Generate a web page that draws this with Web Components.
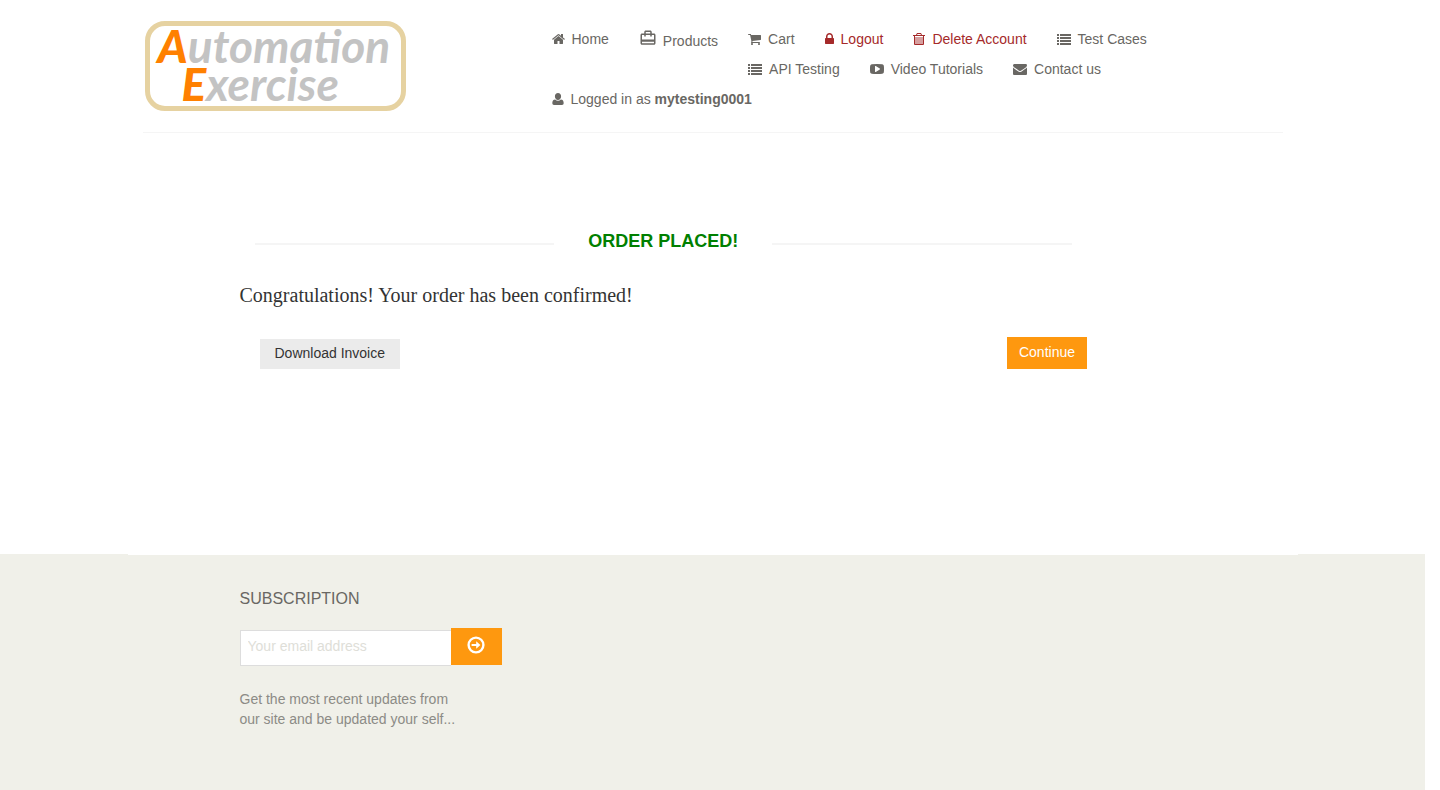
<!DOCTYPE html>
<html lang="en">
<head>
<meta charset="utf-8">
<title>Automation Exercise - Order Placed</title>
<style>
  body {
    margin: 0;
    background: #fff;
    color: #696763;
    font: 14px/20px "Liberation Sans", Arial, sans-serif;
  }
</style>
</head>
<body>
<ae-page>
  <ae-header slot="header"></ae-header>
  <ae-order>Congratulations! Your order has been confirmed!</ae-order>
  <ae-footer slot="footer"></ae-footer>
</ae-page>

<script>
const ICONS = {
  home: ['64 0 1664 1792', '<path d="M1472 992v480q0 26-19 45t-45 19h-384v-384h-256v384h-384q-26 0-45-19t-19-45v-480q0-1 .5-3t.5-3l575-474 575 474q1 2 1 6zm223-69l-62 74q-8 9-21 11h-3q-13 0-21-7l-692-577-692 577q-12 8-24 7-13-2-21-11l-62-74q-8-10-7-23.5t11-21.5l719-599q32-26 76-26t76 26l244 204v-195q0-14 9-23t23-9h192q14 0 23 9t9 23v408l219 182q10 8 11 21.5t-7 23.5z"/>'],
  cart: ['64 0 1664 1792', '<path d="M704 1536q0 52-38 90t-90 38-90-38-38-90 38-90 90-38 90 38 38 90zm896 0q0 52-38 90t-90 38-90-38-38-90 38-90 90-38 90 38 38 90zm128-1088v512q0 24-16.5 42.5t-40.5 21.5l-1044 122q13 60 13 70 0 16-24 64h920q26 0 45 19t19 45-19 45-45 19h-1024q-26 0-45-19t-19-45q0-11 8-31.5t16-36 21.5-40 15.5-29.5l-177-823h-204q-26 0-45-19t-19-45 19-45 45-19h256q16 0 28.5 6.5t19.5 15.5 13 24.5 8 26 5.5 29.5 4.5 26h1201q26 0 45 19t19 45z"/>'],
  lock: ['320 0 1152 1792', '<path d="M640 768h512v-192q0-106-75-181t-181-75-181 75-75 181v192zm832 96v576q0 40-28 68t-68 28h-960q-40 0-68-28t-28-68v-576q0-40 28-68t68-28h32v-192q0-184 132-316t316-132 316 132 132 316v192h32q40 0 68 28t28 68z"/>'],
  trash: ['0 0 12 14', '<path d="M2 5h8v7H2z" opacity=".45"/><path d="M4 1h4l1 2h3v1h-1v8q0 1-1 1H2q-1 0-1-1V4H0V3h3zm.5 1L4 3h4l-.5-1zM2 4v8h8V4z" fill-rule="evenodd"/>'],
  list: ['0 0 14 14', '<path d="M0 2h2v2H0zM3 2h11v2H3zM0 5h2v2H0zM3 5h11v2H3zM0 8h2v2H0zM3 8h11v2H3zM0 11h2v2H0zM3 11h11v2H3z"/>'],
  video: ['0 0 1792 1792', '<path d="M1280 896q0-37-30-54l-512-320q-31-20-65-2-33 18-33 56v640q0 38 33 56 16 8 31 8 20 0 34-10l512-320q30-17 30-54zm512 0q0 96-1 150t-8.5 136.5-22.5 147.5q-16 73-69 123t-124 58q-222 25-671 25t-671-25q-71-8-124.5-58t-69.5-123q-14-65-21.5-147.5t-8.5-136.5-1-150 1-150 8.5-136.5 22.5-147.5q16-73 69-123t124-58q222-25 671-25t671 25q71 8 124.5 58t69.5 123q14 65 21.5 147.5t8.5 136.5 1 150z"/>'],
  envelope: ['0 0 1792 1792', '<path d="M1792 710v794q0 66-47 113t-113 47h-1472q-66 0-113-47t-47-113v-794q44 49 101 87 362 246 497 345 57 42 92.5 65.5t94.5 48 110 24.5h2q51 0 110-24.5t94.5-48 92.5-65.5q170-123 498-345 57-39 100-87zm0-294q0 79-49 151t-122 123q-376 261-468 325-10 7-42.5 31t-54 38.5-52 32.5-57.5 27-50 9h-2q-23 0-50-9t-57.5-27-52-32.5-54-38.5-42.5-31q-91-64-262-182.5t-205-142.5q-62-42-117-115.5t-55-136.5q0-78 41.5-130t118.5-52h1472q65 0 112.5 47t47.5 113z"/>'],
  user: ['0 0 12 14', '<path d="M6 1c1.900 0 3.100 1.400 3.100 3.300S7.900 8 6 8 2.900 6.200 2.900 4.300 4.100 1 6 1zM3.200 7.500Q4.400 8.800 6 8.800t2.800-1.300C10.800 7.700 11.700 9 11.700 11.200q0 1.800-1.700 1.800H2Q.3 13 .3 11.200C.3 9 1.200 7.700 3.200 7.500z"/>'],
  bag: ['0 0 24 24', '<path d="M20 6h-3V4c0-1.110-.89-2-2-2H9c-1.110 0-2 .89-2 2v2H4c-1.110 0-2 .89-2 2v11c0 1.110.89 2 2 2h16c1.110 0 2-.89 2-2V8c0-1.110-.89-2-2-2zM9 4h6v2H9V4zm11 15H4v-2h16v2zm0-5H4V8h3v2h2V8h6v2h2V8h3v6z"/>'],
  arrow: ['0 0 18 18', '<circle cx="9" cy="9" r="7.400" fill="none" stroke="currentColor" stroke-width="2.400"/><path d="M4.600 7.900h4.600V5.200L13.400 9l-4.200 3.800v-2.700H4.600z"/>']
};

/* An icon takes its height from --size and its width from the glyph's own box. */
class AeIcon extends HTMLElement {
  connectedCallback() {
    const [box, shape] = ICONS[this.getAttribute('name')];
    this.attachShadow({ mode: 'open' }).innerHTML = `
      <style>
        :host { display: inline-flex; flex: none; }
        svg { display: block; height: var(--size, 14px); fill: currentColor; }
      </style>
      <svg viewBox="${box}" aria-hidden="true">${shape}</svg>`;
  }
}

class AeLogo extends HTMLElement {
  connectedCallback() {
    this.attachShadow({ mode: 'open' }).innerHTML = `
      <style>
        :host { display: block; }
        a {
          display: block; box-sizing: border-box; width: 261px; height: 90px;
          border: 5px solid #e6d2a1; border-radius: 20px;
          color: #c3c3c3; text-decoration: none; white-space: nowrap;
          font: italic bold 46px/38px Lato, "Liberation Sans", sans-serif;
          padding: 1px 0 0 8px;
        }
        span { display: block; }
        .second { padding-left: 24px; }
        b { color: #ff8000; }
      </style>
      <a href="/"><span><b>A</b>utomation</span><span class="second"><b>E</b>xercise</span></a>`;
  }
}

class AeNavItem extends HTMLElement {
  connectedCallback() {
    const icon = this.getAttribute('icon');
    this.attachShadow({ mode: 'open' }).innerHTML = `
      <style>
        :host { display: block; }
        a {
          display: flex; align-items: center; gap: 7px; height: 30px;
          color: inherit; text-decoration: none; white-space: nowrap;
        }
        :host([icon="bag"]) a { --size: 18px; gap: 6px; height: 34px; }
        :host([icon="bag"]) ae-icon { margin-bottom: 6px; }
        :host([danger]) { color: brown; }
      </style>
      <a href="${this.getAttribute('href')}"><ae-icon name="${icon}"></ae-icon><span><slot></slot></span></a>`;
  }
}

class AeHeader extends HTMLElement {
  connectedCallback() {
    this.attachShadow({ mode: 'open' }).innerHTML = `
      <style>
        :host { display: block; max-width: 1170px; margin: 0 auto; padding: 0 15px; box-sizing: border-box; }
        .row {
          display: grid; grid-template-columns: 1fr 2fr;
          padding-top: 21px; border-bottom: 1px solid #f5f5f5;
        }
        ae-logo { padding: 0 2px 21px; }
        ul { margin: 0; padding: 3px 30px 0 14px; list-style: none; }
        li { float: left; padding: 0 15px; }
      </style>
      <div class="row">
        <ae-logo></ae-logo>
        <nav><ul>
          <li><ae-nav-item icon="home" href="/">Home</ae-nav-item></li>
          <li><ae-nav-item icon="bag" href="/products">Products</ae-nav-item></li>
          <li><ae-nav-item icon="cart" href="/view_cart">Cart</ae-nav-item></li>
          <li><ae-nav-item icon="lock" href="/logout" danger>Logout</ae-nav-item></li>
          <li><ae-nav-item icon="trash" href="/delete_account" danger>Delete Account</ae-nav-item></li>
          <li><ae-nav-item icon="list" href="/test_cases">Test Cases</ae-nav-item></li>
          <li><ae-nav-item icon="list" href="/api_list">API Testing</ae-nav-item></li>
          <li><ae-nav-item icon="video" href="#videos">Video Tutorials</ae-nav-item></li>
          <li><ae-nav-item icon="envelope" href="/contact_us">Contact us</ae-nav-item></li>
          <li><ae-nav-item icon="user" href="#account">Logged in as <b>mytesting0001</b></ae-nav-item></li>
        </ul></nav>
      </div>`;
  }
}

class AeOrder extends HTMLElement {
  connectedCallback() {
    this.attachShadow({ mode: 'open' }).innerHTML = `
      <style>
        :host { display: block; max-width: 1170px; margin: 0 auto; }
        section { box-sizing: border-box; width: 75%; margin-left: 97px; padding: 96px 15px 185px; }
        h2 {
          display: flex; align-items: center; gap: 34px; margin: 0; padding: 0 15px;
          color: green; font-size: 18px; line-height: 24px;
        }
        h2::before, h2::after { content: ""; flex: 1; height: 2px; margin-top: 6px; background: #f5f5f5; }
        p { margin: 29px 0 0; color: #333; font: 20px/26px "Liberation Serif", "Times New Roman", serif; }
        .actions { display: flex; justify-content: space-between; align-items: flex-end; margin-top: 29px; }
        a { text-decoration: none; }
        .download { margin-left: 20px; padding: 4px 15px 6px; background: #ebebeb; color: #333; }
        .continue { padding: 5px 12px 7px; background: #fe980f; color: #fff; }
      </style>
      <section>
        <h2>ORDER PLACED!</h2>
        <p><slot></slot></p>
        <div class="actions">
          <a class="download" href="/download_invoice">Download Invoice</a>
          <a class="continue" href="/">Continue</a>
        </div>
      </section>`;
  }
}

class AeFooter extends HTMLElement {
  connectedCallback() {
    this.attachShadow({ mode: 'open' }).innerHTML = `
      <style>
        :host { display: block; background: #f0f0e9; }
        .container { max-width: 1170px; margin: 0 auto; border-top: 1px solid #fff; }
        .widget { width: 262px; margin-left: 112px; padding: 33px 0 60px; }
        h2 { margin: 0 0 19px; color: #696763; font-size: 16px; line-height: 21px; font-weight: 400; }
        form { display: flex; align-items: flex-start; }
        input {
          box-sizing: border-box; flex: 1; min-width: 0; height: 36px; margin: 2px 0 0; padding: 0 7px 4px;
          border: 1px solid #ddd; border-right: 0; border-radius: 0; background: #fff; color: #696763; font: inherit;
        }
        input::placeholder { color: #deded8; opacity: 1; }
        button {
          --size: 18px; display: flex; align-items: center; justify-content: center;
          width: 51px; height: 37px; padding: 0 0 3px; border: 0; background: #fe980f; color: #fff;
        }
        p { margin: 23px 0 0; color: #8c8b86; }
      </style>
      <div class="container"><div class="widget">
        <h2>SUBSCRIPTION</h2>
        <form>
          <input type="email" placeholder="Your email address" aria-label="Your email address">
          <button type="submit" aria-label="Subscribe"><ae-icon name="arrow"></ae-icon></button>
        </form>
        <p>Get the most recent updates from<br>our site and be updated your self...</p>
      </div></div>`;
  }
}

class AePage extends HTMLElement {
  connectedCallback() {
    this.attachShadow({ mode: 'open' }).innerHTML = `
      <style>
        :host { display: flex; flex-direction: column; box-sizing: border-box; min-height: 100vh; padding-right: 15px; }
        main { display: block; }
        footer { flex: 1; display: grid; }
      </style>
      <header><slot name="header"></slot></header>
      <main><slot></slot></main>
      <footer><slot name="footer"></slot></footer>`;
  }
}

customElements.define('ae-icon', AeIcon);
customElements.define('ae-logo', AeLogo);
customElements.define('ae-nav-item', AeNavItem);
customElements.define('ae-header', AeHeader);
customElements.define('ae-order', AeOrder);
customElements.define('ae-footer', AeFooter);
customElements.define('ae-page', AePage);
</script>
</body>
</html>
